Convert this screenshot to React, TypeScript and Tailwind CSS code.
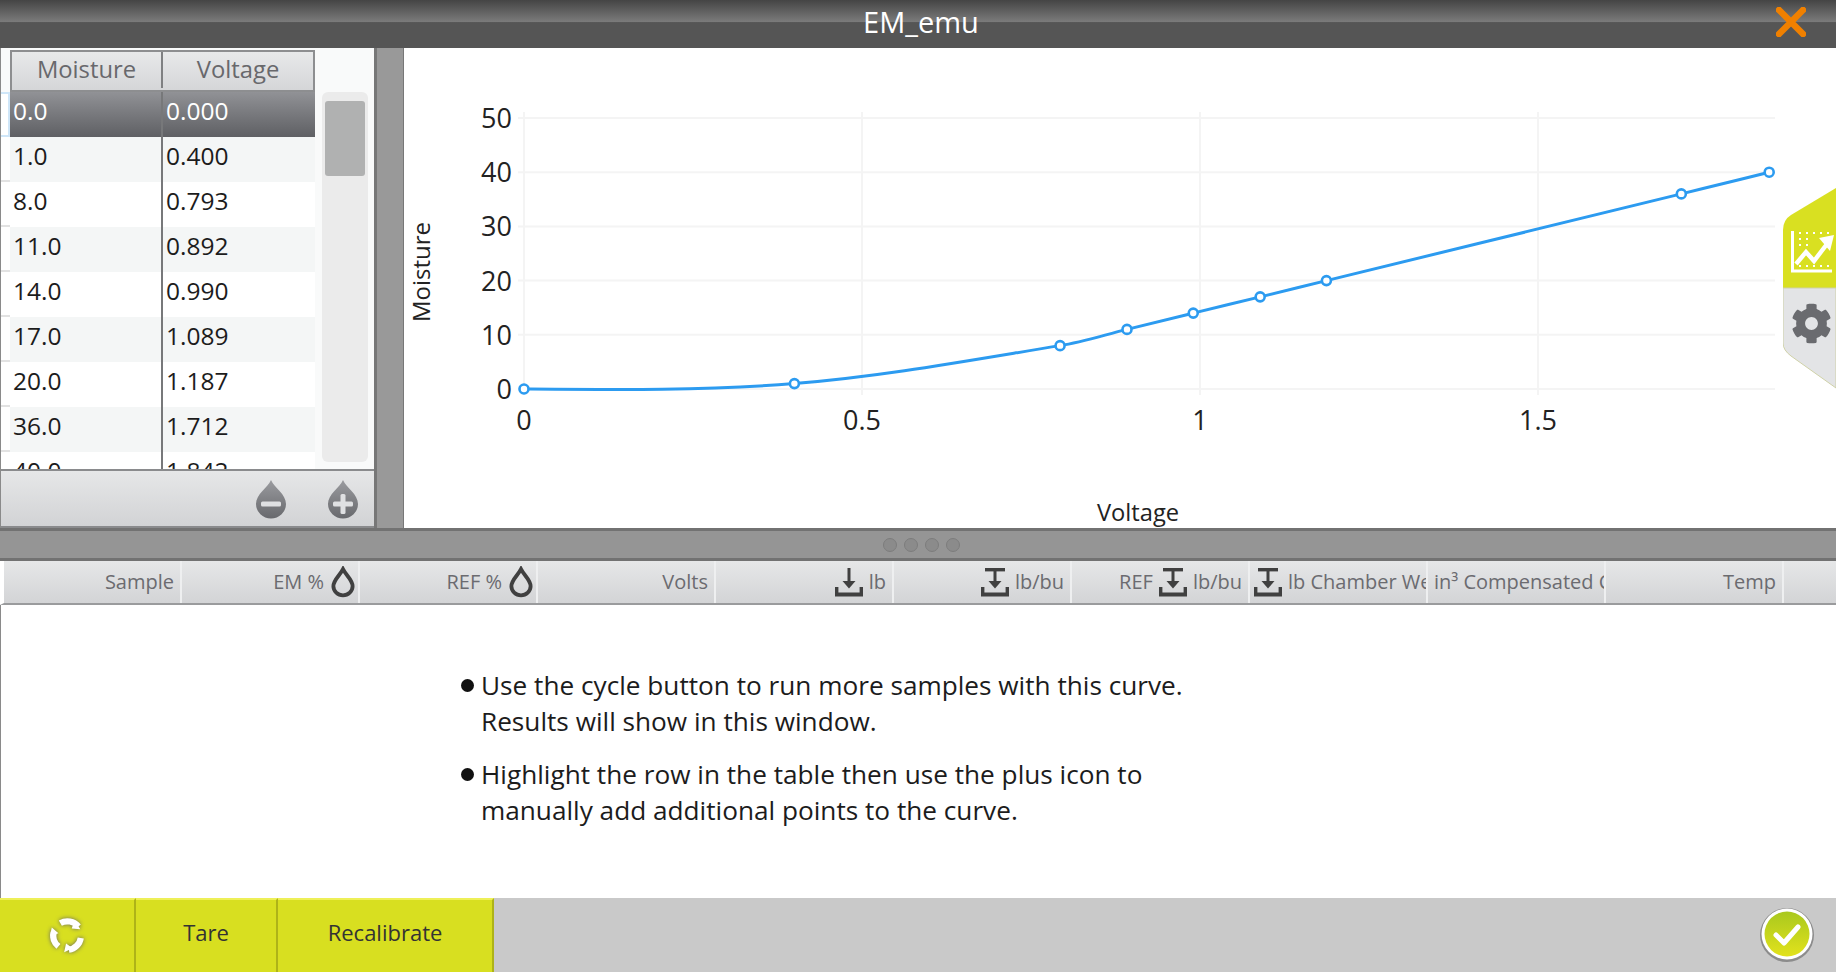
import { FaCog } from "react-icons/fa";

const FONT = "font-['Open_Sans','Noto_Sans',sans-serif]";

const rows = [
  ["0.0", "0.000"],
  ["1.0", "0.400"],
  ["8.0", "0.793"],
  ["11.0", "0.892"],
  ["14.0", "0.990"],
  ["17.0", "1.089"],
  ["20.0", "1.187"],
  ["36.0", "1.712"],
  ["40.0", "1.842"],
];

const X = (v: number) => 524 + v * 676;
const Y = (v: number) => 389 - v * 5.42;
const pts: [number, number][] = rows.map((r) => [X(parseFloat(r[1])), Y(parseFloat(r[0]))]);

function spline(p: [number, number][]) {
  const tangent = (i: number): [number, number] => {
    const a: [number, number] = i === 0 ? [p[0][0] - 120, p[0][1] - 9] : p[i - 1];
    const c = p[i + 1] || p[i];
    const dx = c[0] - a[0];
    const dy = c[1] - a[1];
    const l = Math.hypot(dx, dy);
    return [dx / l, dy / l];
  };
  let d = `M${p[0][0]} ${p[0][1]}`;
  for (let i = 0; i < p.length - 1; i++) {
    const b = p[i];
    const c = p[i + 1];
    const len = Math.hypot(c[0] - b[0], c[1] - b[1]) / 3;
    const t0 = tangent(i);
    const t1 = tangent(i + 1);
    d += ` C${b[0] + t0[0] * len} ${b[1] + t0[1] * len} ${c[0] - t1[0] * len} ${c[1] - t1[1] * len} ${c[0]} ${c[1]}`;
  }
  return d;
}

function Drop() {
  return (
    <svg viewBox="0 0 24 30" className="-mr-[4px] h-[32px] w-[26px]" fill="none" stroke="#404040" strokeWidth="3.6">
      <path d="M12 3 C9 9 3 13 3 19 a9 8.5 0 0 0 18 0 C21 13 15 9 12 3 Z" />
    </svg>
  );
}

function Weight({ top = false, className = "" }: { top?: boolean; className?: string }) {
  return (
    <svg viewBox="0 0 28 30" className={className} fill="#404040">
      {top && <rect x="4" y="1" width="20" height="3.4" />}
      <rect x="12.5" y={top ? 3 : 1} width="3" height={top ? 13 : 15} />
      <path d="M7.5 14 H20.5 L14 21.5 Z" />
      <path d="M0 20 H3.4 V25.5 H24.6 V20 H28 V29.5 H0 Z" />
    </svg>
  );
}

function DropAction({ plus }: { plus?: boolean }) {
  return (
    <svg viewBox="0 0 32 40" className="h-[40px] w-[32px]">
      <defs>
        <linearGradient id={plus ? "dp" : "dm"} x1="0" y1="0" x2="0" y2="1">
          <stop offset="0" stopColor="#9a9b9f" />
          <stop offset="1" stopColor="#68696d" />
        </linearGradient>
      </defs>
      <path d="M16 1 C12.5 9 1 15 1 25 a15 14.5 0 0 0 30 0 C31 15 19.5 9 16 1 Z" fill={`url(#${plus ? "dp" : "dm"})`} />
      <rect x="6" y="22.5" width="20" height="5" rx="1.5" fill="#dfe0e2" />
      {plus && <rect x="13.5" y="15" width="5" height="20" rx="1.5" fill="#dfe0e2" />}
    </svg>
  );
}

function Cell({ children }: { children: React.ReactNode }) {
  return (
    <div className="flex h-full w-[178px] shrink-0 items-center justify-end gap-[6px] border-r-2 border-[#eeeff0] pr-[6px] text-[20px] text-[#6b6b70]">
      {children}
    </div>
  );
}

export default function App() {
  return (
    <div className={`${FONT} flex h-[972px] w-[1836px] flex-col overflow-hidden bg-white`}>
      {/* Title bar */}
      <header className="relative flex h-[48px] shrink-0 items-center justify-center bg-[linear-gradient(to_bottom,#444444_0%,#7a7a7a_45%,#555555_47%,#555555_100%)] pb-[4px] pl-[6px]">
        <span className="text-[29px] text-white">EM_emu</span>
        <svg viewBox="0 0 30 30" className="absolute right-[30px] top-[7px] h-[30px] w-[30px]" stroke="#f08000" strokeWidth="6.5" strokeLinecap="round">
          <path d="M3 3 L27 27 M27 3 L3 27" />
        </svg>
      </header>

      {/* Upper pane */}
      <div className="flex h-[480px] shrink-0">
        <div className="flex w-[374px] shrink-0 flex-col border-l border-[#8a8a8a]">
          <div className="flex h-[421px] min-h-0 bg-[#f9fafa] pt-[2px]">
            <div className="flex w-[314px] shrink-0 flex-col overflow-hidden">
              <div className="flex h-[42px] shrink-0 pl-[9px]">
                <div className="flex flex-1 border-2 border-[#8d8e90] bg-gradient-to-b from-[#e8e9ea] to-[#d5d6d8] pb-[2px] text-[23.8px] text-[#68686c]">
                  <div className="flex w-[151px] items-center justify-center border-r-2 border-[#7f8082]">Moisture</div>
                  <div className="flex flex-1 items-center justify-center">Voltage</div>
                </div>
              </div>
              {rows.map((r, i) => (
                <div key={r[0]} className="flex h-[45px] shrink-0">
                  <div
                    className={`w-[9px] shrink-0 ${
                      i === 0 ? "border-y-2 border-r-2 border-[#cfe6f8] bg-white" : "border-b-2 border-[#e2e2e2] bg-white"
                    }`}
                  />
                  <div
                    className={`flex flex-1 items-center text-[24.5px] ${
                      i === 0
                        ? "bg-gradient-to-b from-[#919296] to-[#5f6064] text-white"
                        : i % 2 === 1
                          ? "bg-[#f4f6f6] text-[#1c1c1c]"
                          : "bg-white text-[#1c1c1c]"
                    }`}
                  >
                    <div className="flex h-[45px] w-[153px] items-center border-r-2 border-[#77787a] pb-[7px] pl-[3px]">{r[0]}</div>
                    <div className="flex h-[45px] flex-1 items-center pb-[7px] pl-[3px]">{r[1]}</div>
                  </div>
                </div>
              ))}
            </div>
            <div className="relative ml-[7px] mt-[42px] h-[370px] w-[46px] rounded-[6px] bg-[#ebebeb]">
              <div className="absolute left-[3px] top-[9px] h-[75px] w-[40px] rounded-[3px] bg-[#b0b1b1]" />
            </div>
          </div>
          <div className="flex h-[59px] items-center justify-end gap-[40px] border-y-2 border-[#8a8b8d] bg-gradient-to-b from-[#e6e7e8] to-[#d2d3d5] pr-[15px]">
            <DropAction />
            <DropAction plus />
          </div>
        </div>
        <div className="w-[30px] shrink-0 border-l-[3px] border-r border-[#777777] bg-[#999999]" />
        <div className="relative flex-1 overflow-hidden bg-white">
          <svg viewBox="404 48 1432 480" className="block h-[480px] w-[1432px]">
            <g stroke="#f4f4f4" strokeWidth="2">
              {[0, 0.5, 1, 1.5].map((v) => (
                <line key={v} x1={X(v)} x2={X(v)} y1="112" y2="395" />
              ))}
              {[0, 10, 20, 30, 40, 50].map((v) => (
                <line key={v} x1="518" x2="1775" y1={Y(v)} y2={Y(v)} />
              ))}
            </g>
            <g fontSize="27" fill="#222222" textAnchor="end">
              {[0, 10, 20, 30, 40, 50].map((v) => (
                <text key={v} x="512" y={Y(v) + 10}>{v}</text>
              ))}
            </g>
            <g fontSize="27" fill="#222222" textAnchor="middle">
              {[0, 0.5, 1, 1.5].map((v) => (
                <text key={v} x={X(v)} y="430">{v}</text>
              ))}
            </g>
            <text x="1138" y="521" fontSize="23.7" fill="#222222" textAnchor="middle">Voltage</text>
            <text transform="translate(430 272) rotate(-90)" fontSize="24" fill="#222222" textAnchor="middle">Moisture</text>
            <path d={spline(pts)} fill="none" stroke="#2c9bf0" strokeWidth="3" />
            {pts.map((p) => (
              <circle key={p[0]} cx={p[0]} cy={p[1]} r="4.5" fill="white" stroke="#2c9bf0" strokeWidth="2.6" />
            ))}
          </svg>
          {/* Side tab */}
          <svg viewBox="0 0 53 202" className="absolute left-[1379px] top-[140px] h-[202px] w-[53px]">
            <path d="M53 0 L8 27 Q0 32 0 42 V100 H53 Z" fill="#d9e021" />
            <path d="M0 100 H53 V200 L8 168 Q0 162 0 155 Z" fill="#e3e4e6" stroke="#cfd1a8" strokeWidth="1" />
            <g fill="none" stroke="white">
              <path d="M9.5 43 V83 H49" strokeWidth="3" />
              <path d="M13 76 L23 64 L31 73 L44 56" strokeWidth="4.4" />
            </g>
            <path d="M36 50 L51 47 L47 63 Z" fill="white" />
            <g fill="white">
              {[44, 50, 56].map((y) =>
                [16, 23, 30, 37, 44].map((x) => <rect key={`${x}-${y}`} x={x} y={y} width="2" height="2" opacity={y === 44 || x < 30 ? 1 : 0} />)
              )}
              {[16, 23, 30, 37, 44].map((x) => <rect key={x} x={x} y="77" width="2" height="2" />)}
            </g>
          </svg>
          <FaCog className="absolute left-[1387px] top-[255px] h-[41px] w-[41px] text-[#6a6b6f]" />
        </div>
      </div>

      {/* Splitter */}
      <div className="flex h-[33px] shrink-0 items-center justify-center gap-[7px] border-y-[3px] border-[#727272] bg-[#959595] pl-[6px]">
        {[0, 1, 2, 3].map((i) => (
          <span key={i} className="h-[14px] w-[14px] rounded-full border border-[#7d7d7d] bg-[#8b8b8b]" />
        ))}
      </div>

      {/* Results header */}
      <div className="flex h-[44px] shrink-0 border-b-2 border-l-[4px] border-[#9a9b9d] border-l-white bg-gradient-to-b from-[#e6e7e8] to-[#d3d4d6]">
        <Cell>Sample</Cell>
        <Cell>EM %<Drop /></Cell>
        <Cell>REF %<Drop /></Cell>
        <Cell>Volts</Cell>
        <Cell><Weight className="-ml-[1px] h-[30px] w-[28px]" />lb</Cell>
        <Cell><Weight top className="h-[30px] w-[28px]" />lb/bu</Cell>
        <Cell>REF<Weight top className="h-[30px] w-[28px]" />lb/bu</Cell>
        <div className="flex h-full w-[178px] shrink-0 items-center justify-start gap-[6px] overflow-hidden whitespace-nowrap border-r-2 border-[#eeeff0] pl-[4px] text-[20px] text-[#6b6b70]">
          <Weight top className="h-[30px] w-[28px] shrink-0" />lb Chamber Weight
        </div>
        <div className="flex h-full w-[178px] shrink-0 items-center overflow-hidden whitespace-nowrap border-r-2 border-[#eeeff0] pl-[6px] text-[20px] text-[#6b6b70]">
          in³ Compensated Chamber
        </div>
        <Cell>Temp</Cell>
      </div>

      {/* Notes */}
      <main className="flex-1 border-l border-[#8a8a8a] bg-white pl-[460px] pt-[62px] text-[26.2px] leading-[36px] text-[#1c1c1c]">
        <ul className="flex flex-col gap-[17px]">
          <li className="flex">
            <span className="mr-[7px] mt-[12px] h-[13px] w-[13px] shrink-0 rounded-full bg-[#111111]" />
            <span>Use the cycle button to run more samples with this curve.<br />Results will show in this window.</span>
          </li>
          <li className="flex">
            <span className="mr-[7px] mt-[12px] h-[13px] w-[13px] shrink-0 rounded-full bg-[#111111]" />
            <span>Highlight the row in the table then use the plus icon to<br />manually add additional points to the curve.</span>
          </li>
        </ul>
      </main>

      {/* Footer */}
      <footer className="flex h-[74px] shrink-0 items-stretch bg-[#c9c9c9]">
        <button className="flex w-[136px] items-center justify-center border-r-2 border-t-2 border-[#aeb318] border-t-[#eef058] bg-[#d8df20]">
          <svg viewBox="0 0 40 40" className="h-[38px] w-[38px]" fill="none" stroke="white" strokeWidth="6.5" style={{ filter: "drop-shadow(0 0 2px #666)" }}>
            <path d="M13 6.5 A15 15 0 0 1 32 10" />
            <path d="M34.5 22 A15 15 0 0 1 22 34.5" />
            <path d="M11 31 A15 15 0 0 1 6 16" />
            <path d="M28 3 L34 13 L25 12 Z M26 33 L17 37 L19 28 Z M2 20 L4 11 L11 17 Z" fill="white" stroke="none" />
          </svg>
        </button>
        <button className="w-[142px] border-r-2 border-t-2 border-[#aeb318] border-t-[#eef058] pb-[8px] bg-[#d8df20] text-[22px] text-[#333333]">Tare</button>
        <button className="w-[216px] border-r-2 border-t-2 border-[#aeb318] border-t-[#eef058] pb-[8px] bg-[#d8df20] text-[22px] text-[#333333]">Recalibrate</button>
        <div className="flex flex-1 items-center justify-end pr-[21px]">
          <svg viewBox="0 0 56 56" className="h-[56px] w-[56px]">
            <defs>
              <linearGradient id="ok" x1="0" y1="0" x2="0" y2="1">
                <stop offset="0" stopColor="#a9c81e" />
                <stop offset="1" stopColor="#e2e21c" />
              </linearGradient>
            </defs>
            <circle cx="28" cy="28" r="27" fill="#8c8c8c" />
            <circle cx="28" cy="27" r="25.5" fill="white" />
            <circle cx="28" cy="27" r="22.5" fill="url(#ok)" />
            <path d="M17 28 L25 36 L39 20" fill="none" stroke="white" strokeWidth="5" strokeLinecap="round" strokeLinejoin="round" />
          </svg>
        </div>
      </footer>
    </div>
  );
}
